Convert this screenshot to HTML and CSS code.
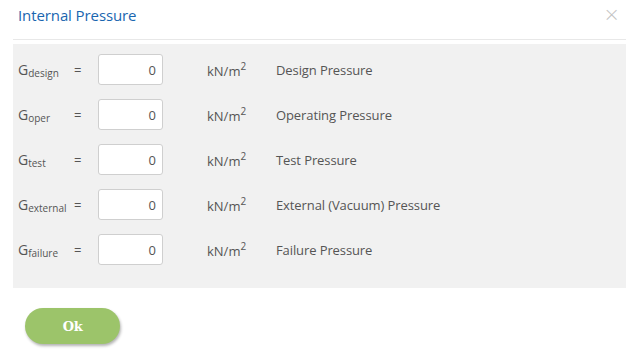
FILE: index.html
```html
<!DOCTYPE html>
<html>
<head>
<meta charset="utf-8">
<link rel="stylesheet" href="styles.css">
</head>
<body>
<div class="modal">
  <div class="modal-header">
    <h1 class="title">Internal Pressure</h1>
    <span class="close">&times;</span>
  </div>
  <div class="panel">
    <div class="row">
      <span class="sym">G<sub>design</sub></span><span class="eq">=</span>
      <input class="val" type="text" value="0"><span class="unit">kN/m<sup>2</sup></span>
      <span class="desc">Design Pressure</span>
    </div>
    <div class="row">
      <span class="sym">G<sub>oper</sub></span><span class="eq">=</span>
      <input class="val" type="text" value="0"><span class="unit">kN/m<sup>2</sup></span>
      <span class="desc">Operating Pressure</span>
    </div>
    <div class="row">
      <span class="sym">G<sub>test</sub></span><span class="eq">=</span>
      <input class="val" type="text" value="0"><span class="unit">kN/m<sup>2</sup></span>
      <span class="desc">Test Pressure</span>
    </div>
    <div class="row">
      <span class="sym">G<sub>external</sub></span><span class="eq">=</span>
      <input class="val" type="text" value="0"><span class="unit">kN/m<sup>2</sup></span>
      <span class="desc">External (Vacuum) Pressure</span>
    </div>
    <div class="row">
      <span class="sym">G<sub>failure</sub></span><span class="eq">=</span>
      <input class="val" type="text" value="0"><span class="unit">kN/m<sup>2</sup></span>
      <span class="desc">Failure Pressure</span>
    </div>
  </div>
  <div class="footer">
    <button class="ok">Ok</button>
  </div>
</div>
</body>
</html>
```
FILE: styles.css
```css
* { box-sizing: border-box; }
html, body { margin: 0; padding: 0; background: #fff; }
body { font-family: "Open Sans", "Liberation Sans", sans-serif; color: #555; }
.modal { width: 638px; height: 364px; }
.modal-header {
  height: 40px;
  margin: 0 12px 0 13px;
  border-bottom: 1px solid #e8e8e8;
  display: flex;
  justify-content: space-between;
  align-items: flex-start;
}
.title {
  margin: 0;
  padding: 5px 0 0 5px;
  font-size: 15px;
  font-weight: 400;
  color: #1a66b0;
  line-height: 20px;
  letter-spacing: -0.1px;
}
.close {
  color: #c4c4c4;
  font-size: 20px;
  line-height: 20px;
  padding-top: 4px;
  margin-right: 6px;
  font-family: "DejaVu Sans", sans-serif;
  font-weight: 300;
}
.panel {
  margin: 4px 12px 0 13px;
  background: #f1f1f1;
  padding: 10px 0 23px 5px;
  display: flex;
  flex-direction: column;
  gap: 14px;
  height: 244px;
}
.row {
  display: grid;
  grid-template-columns: 56px 24px 65px 44px 69px auto;
  align-items: center;
  height: 31px;
  font-size: 13px;
}
.sym { grid-column: 1; font-size: 14px; }
.sym sub { font-size: 10px; vertical-align: -2px; }
.eq { grid-column: 2; }
.val {
  grid-column: 3;
  width: 65px;
  height: 31px;
  border: 1px solid #cfcfcf;
  border-radius: 3px;
  background: #fff;
  text-align: right;
  padding: 0 6px;
  font-family: inherit;
  font-size: 13px;
  color: #555;
}
.unit { grid-column: 5; }
.unit sup { font-size: 10px; vertical-align: 6px; }
.desc { grid-column: 6; letter-spacing: -0.1px; }
.footer { padding: 20px 0 0 25px; }
.ok {
  width: 95px;
  height: 36px;
  border: none;
  border-radius: 18px;
  background: #9cc46a;
  color: #fff;
  font-family: "DejaVu Serif", serif;
  font-weight: 700;
  font-size: 13px;
  letter-spacing: -0.5px;
  box-shadow: 1px 2px 3px rgba(0,0,0,0.3);
}
```
